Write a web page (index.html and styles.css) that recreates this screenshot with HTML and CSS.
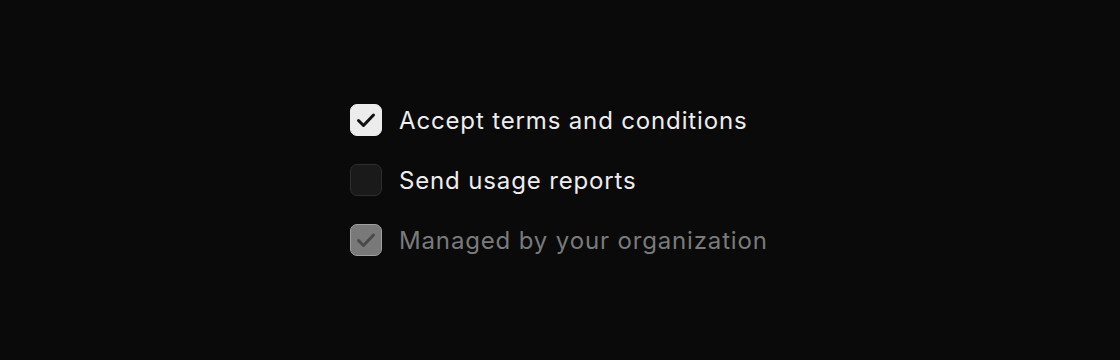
FILE: index.html
```html
<!DOCTYPE html>
<html lang="en">
<head>
  <meta charset="UTF-8" />
  <title>Checkboxes</title>
  <link rel="stylesheet" href="styles.css">
</head>
<body>
  <div class="stage">
    <div class="list">
      <label class="item">
        <span class="box checked">
          <svg viewBox="0 0 24 24"><path d="M4.5 12.5l5 5L19.5 7" /></svg>
        </span>
        <span class="text">Accept terms and conditions</span>
      </label>
      <label class="item">
        <span class="box"></span>
        <span class="text">Send usage reports</span>
      </label>
      <label class="item disabled">
        <span class="box checked">
          <svg viewBox="0 0 24 24"><path d="M4.5 12.5l5 5L19.5 7" /></svg>
        </span>
        <span class="text">Managed by your organization</span>
      </label>
    </div>
  </div>
</body>
</html>
```

FILE: styles.css
```css
* {
  box-sizing: border-box;
}
body {
  margin: 0;
  background: #0a0a0a;
  font-family: Inter, "Noto Sans", sans-serif;
  color: #ededed;
}
.stage {
  height: 360px;
  display: flex;
  align-items: center;
  padding-left: 350px;
}
.list {
  display: flex;
  flex-direction: column;
  gap: 28px;
}
.item {
  display: flex;
  align-items: flex-start;
  height: 32px;
  gap: 17px;
  font-size: 24px;
  line-height: 32px;
}
.text {
  letter-spacing: 0.85px;
  padding-top: 1px;
  height: 32px;
}
.box {
  width: 32px;
  height: 32px;
  border-radius: 7px;
  border: 1.5px solid #2e2e2e;
  background: #1a1a1a;
  display: flex;
  align-items: center;
  justify-content: center;
}
.box.checked {
  background: #ececec;
  border-color: #ececec;
}
.box svg {
  width: 24px;
  height: 24px;
  fill: none;
  stroke: #111;
  stroke-width: 3;
  stroke-linecap: round;
  stroke-linejoin: round;
}
.disabled .box.checked {
  background: #797979;
  border-color: #a0a0a0;
}
.disabled .box svg {
  stroke: #4a4a4a;
}
.disabled .text {
  color: #7a7a7a;
}
```
